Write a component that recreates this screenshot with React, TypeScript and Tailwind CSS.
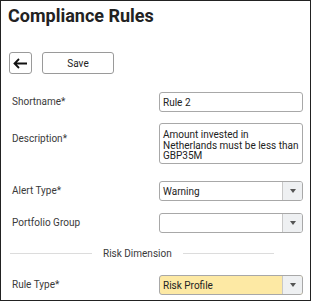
import React from 'react';

function Caret() {
  return (
    <svg width="6" height="4" viewBox="0 0 6 4" className="fill-[#555]">
      <path d="M0 0h6L3 4z" />
    </svg>
  );
}

function Select({ value, highlight }: { value?: string; highlight?: boolean }) {
  return (
    <div
      className={`flex h-[20px] w-[144px] overflow-hidden rounded-[3px] border border-[#a8a8a8] ${
        highlight ? 'bg-[#fde9a4]' : 'bg-white'
      }`}
    >
      <div className="flex flex-1 items-center pl-[3px] text-[10px] text-[#222]">{value}</div>
      <div className="flex w-[20px] items-center justify-center border-l border-[#c8c8c8] bg-[#eef0f2]">
        <Caret />
      </div>
    </div>
  );
}

function Label({ children, className = '' }: { children: React.ReactNode; className?: string }) {
  return <div className={`w-[147px] shrink-0 text-[10px] leading-[12px] text-[#3a3a3a] ${className}`}>{children}</div>;
}

export default function App() {
  return (
    <div className="h-[301px] w-[311px] overflow-hidden border border-[#222] bg-white font-['Roboto',sans-serif]">
      <h1 className="pl-[7px] pt-[3px] text-[18px] font-bold leading-[24px] text-[#222]">Compliance Rules</h1>

      <div className="mt-[24px] flex gap-[10px] pl-[8px]">
        <button className="flex h-[22px] w-[23px] items-center justify-center rounded-[3px] border border-[#9a9a9a] bg-white">
          <svg width="15" height="11" viewBox="0 0 15 11" fill="none" stroke="#111" strokeWidth="1.8">
            <path d="M14 5.5H2M6 1L1.5 5.5 6 10" />
          </svg>
        </button>
        <button className="h-[22px] w-[72px] rounded-[3px] border border-[#9a9a9a] bg-white text-[10px] text-[#222]">
          Save
        </button>
      </div>

      <div className="pl-[11px]">
        <div className="mt-[18px] flex items-center">
          <Label>Shortname*</Label>
          <div className="flex h-[20px] w-[144px] items-center rounded-[3px] border border-[#a8a8a8] pl-[3px] text-[10px] text-[#222]">
            Rule 2
          </div>
        </div>

        <div className="mt-[11px] flex items-start">
          <Label className="pt-[10px]">Description*</Label>
          <div className="h-[41px] w-[144px] rounded-[3px] border border-[#a8a8a8] px-[3px] pt-[6px] text-[10px] leading-[10.5px] text-[#222]">
            Amount invested in Netherlands must be less than GBP35M
          </div>
        </div>

        <div className="mt-[17px] flex items-center">
          <Label>Alert Type*</Label>
          <Select value="Warning" />
        </div>

        <div className="mt-[12px] flex items-center">
          <Label>Portfolio Group</Label>
          <Select />
        </div>
      </div>

      <div className="mt-[13px] flex h-[14px] items-center gap-[11px] pl-[9px]">
        <div className="h-px w-[82px] bg-[#dcdcdc]" />
        <span className="text-[10px] text-[#3a3a3a]">Risk Dimension</span>
        <div className="h-px w-[91px] bg-[#dcdcdc]" />
      </div>

      <div className="mt-[15px] flex items-center pl-[11px]">
        <Label>Rule Type*</Label>
        <Select value="Risk Profile" highlight />
      </div>
    </div>
  );
}
